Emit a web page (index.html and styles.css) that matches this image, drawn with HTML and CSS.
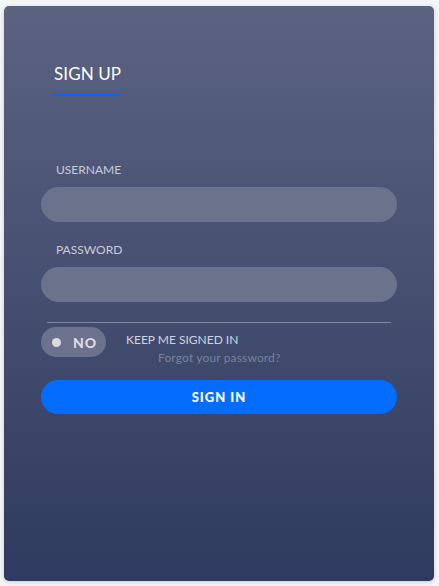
FILE: index.html
```html
<!DOCTYPE html>
<html>
<head>
<meta charset="utf-8">
<link rel="stylesheet" href="styles.css">
</head>
<body>
<div class="card">
  <div class="tabs">
    <span class="tab">SIGN UP</span>
  </div>
  <form class="form">
    <label class="label">USERNAME</label>
    <div class="input"></div>
    <label class="label label-pw">PASSWORD</label>
    <div class="input"></div>
    <div class="divider"></div>
    <div class="keep-row">
      <div class="toggle"><span class="dot"></span><span class="toggle-text">NO</span></div>
      <div class="keep-text">
        <div class="keep">KEEP ME SIGNED IN</div>
        <div class="forgot">Forgot your password?</div>
      </div>
    </div>
    <div class="button">SIGN IN</div>
  </form>
</div>
</body>
</html>
```
FILE: styles.css
```css
html, body {
  margin: 0;
  padding: 0;
}
body {
  background: #f4f5f7;
  width: 439px;
  height: 586px;
  padding: 6px 5px 5px 4px;
  box-sizing: border-box;
  font-family: "Lato", "Open Sans", sans-serif;
}
.card {
  width: 430px;
  height: 575px;
  border-radius: 5px;
  background: linear-gradient(180deg, #5c6381 0%, #2e3a5f 100%);
  box-shadow: 0 1px 4px rgba(0,0,0,0.18);
  box-sizing: border-box;
  padding: 58px 37px 0 37px;
}
.tabs {
  padding-left: 13px;
}
.tab {
  display: inline-block;
  color: #ffffff;
  font-size: 17px;
  line-height: 20px;
  padding-bottom: 10px;
  border-bottom: 2px solid #1161ee;
  letter-spacing: 0.1px;
}
.form {
  margin-top: 67px;
  display: flex;
  flex-direction: column;
}
.label {
  color: #c8ccd9;
  font-size: 12px;
  line-height: 14px;
  padding-left: 15px;
  margin-bottom: 10px;
}
.label-pw {
  margin-top: 21px;
}
.input {
  height: 35px;
  border-radius: 18px;
  background: #6b728c;
}
.divider {
  height: 1px;
  background: #8288a1;
  margin: 20px 6px 0 6px;
}
.keep-row {
  display: flex;
  margin-top: 4px;
}
.toggle {
  width: 65px;
  height: 30px;
  border-radius: 15px;
  background: #6c728d;
  display: flex;
  align-items: center;
  box-sizing: border-box;
  padding-left: 11px;
}
.dot {
  width: 9px;
  height: 9px;
  border-radius: 50%;
  background: #d9dbe3;
}
.toggle-text {
  margin-left: 12px;
  color: #d9dbe3;
  font-weight: 900;
  font-size: 14px;
  letter-spacing: 0.8px;
}
.keep-text {
  margin-left: 20px;
  padding-top: 6px;
}
.keep {
  color: #d1d4df;
  font-size: 12px;
  line-height: 14px;
}
.forgot {
  color: #7b819c;
  font-size: 12px;
  line-height: 14px;
  margin-top: 4px;
  margin-left: 32px;
  letter-spacing: 0.15px;
}
.button {
  margin-top: 15px;
  height: 34px;
  border-radius: 17px;
  background: #046dff;
  color: #ffffff;
  font-weight: 900;
  font-size: 13px;
  letter-spacing: 1px;
  display: flex;
  align-items: center;
  justify-content: center;
}
```
